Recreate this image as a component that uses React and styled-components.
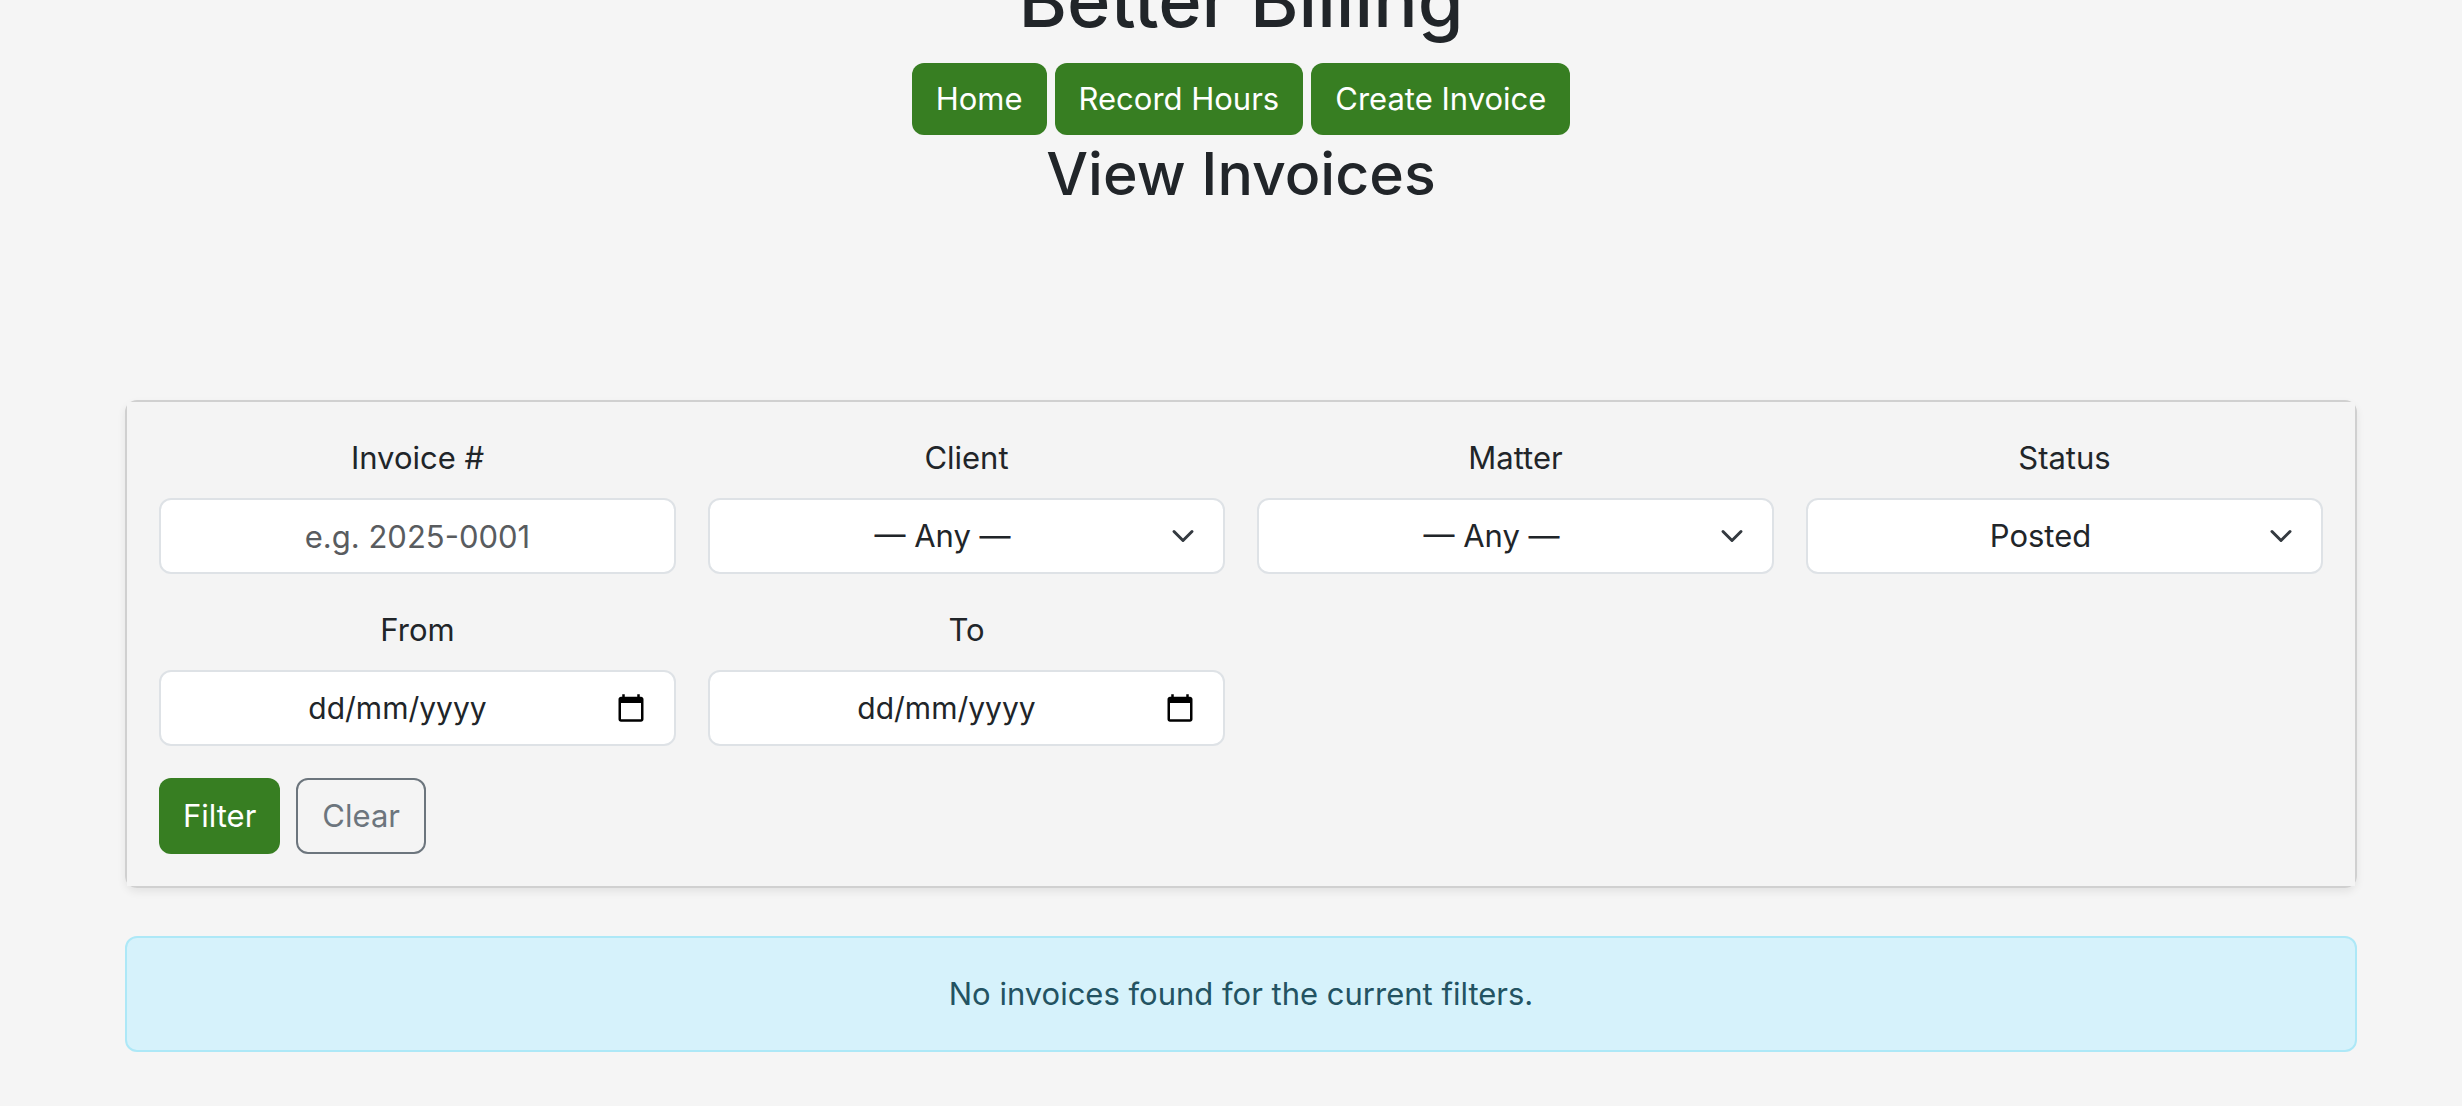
import React from "react";
import styled, { createGlobalStyle, css } from "styled-components";

const chevron = `url("data:image/svg+xml,%3Csvg xmlns='http://www.w3.org/2000/svg' viewBox='0 0 16 16'%3E%3Cpath fill='none' stroke='%23343a40' stroke-linecap='round' stroke-linejoin='round' stroke-width='2' d='m2 5 6 6 6-6'/%3E%3C/svg%3E")`;
const calendar = `url("data:image/svg+xml,%3Csvg xmlns='http://www.w3.org/2000/svg' viewBox='0 0 24 24'%3E%3Cpath d='M20 3h-1V1h-2v2H7V1H5v2H4c-1.1 0-2 .9-2 2v16c0 1.1.9 2 2 2h16c1.1 0 2-.9 2-2V5c0-1.1-.9-2-2-2zm0 18H4V8h16v13z'/%3E%3C/svg%3E")`;

const GlobalStyle = createGlobalStyle`
  *, *::before, *::after { box-sizing: border-box; }
  body {
    margin: 0;
    background: #f5f5f5;
    color: #212529;
    font-family: Inter, "Liberation Sans", sans-serif;
    font-size: 31px;
    line-height: 48px;
    text-align: center;
  }
`;

const Page = styled.div`
  padding: 0 105px 0 125px;
`;

const Header = styled.header`
  margin-top: -48px;
  margin-bottom: 188px;
`;

const Title = styled.h1`
  margin: 0 0 15px;
  font-size: 74px;
  line-height: 96px;
  font-weight: 500;
`;

const Subtitle = styled.h2`
  margin: 0;
  font-size: 59px;
  line-height: 77px;
  font-weight: 500;
`;

const Nav = styled.nav`
  display: flex;
  justify-content: center;
  gap: 8px;
`;

const buttonBase = css`
  display: inline-flex;
  align-items: center;
  justify-content: center;
  padding: 12px 24px;
  border: 0;
  border-radius: 12px;
  font: inherit;
  cursor: pointer;
`;

const NavLink = styled.a`
  ${buttonBase}
  background: #377e22;
  color: #fff;
  text-decoration: none;
`;

const Button = styled.button`
  ${buttonBase}
  height: 76px;
  ${({ $outline }) =>
    $outline
      ? css`
          background: transparent;
          border: 2px solid #6c757d;
          color: #6c757d;
        `
      : css`
          background: #377e22;
          color: #fff;
        `}
`;

const Card = styled.section`
  border: 2px solid #d0d0d0;
  border-radius: 12px;
  box-shadow: 0 4px 8px rgba(0, 0, 0, 0.075);
`;

const CardBody = styled.form`
  display: grid;
  gap: 32px;
  padding: 32px;
  background: #f4f4f4;
`;

const Fields = styled.div`
  display: grid;
  grid-template-columns: repeat(4, 1fr);
  gap: 32px;
`;

const Field = styled.div`
  display: flex;
  flex-direction: column;
  gap: 16px;
  min-width: 0;
`;

const control = css`
  width: 100%;
  height: 76px;
  padding: 12px 24px;
  border: 2px solid #dee2e6;
  border-radius: 12px;
  background-color: #fff;
  background-repeat: no-repeat;
  color: #212529;
  font: inherit;
  text-align: center;
  appearance: none;
`;

const TextInput = styled.input`
  ${control}
  &::placeholder {
    color: #595c5f;
    opacity: 1;
  }
`;

const DateInput = styled.input`
  ${control}
  padding-right: 64px;
  font-size: 30px;
  background-image: ${calendar};
  background-size: 30px 30px;
  background-position: right 28px center;
  &::placeholder {
    color: #212529;
    opacity: 1;
  }
`;

const Select = styled.select`
  ${control}
  padding-right: 72px;
  background-image: ${chevron};
  background-size: 24px 24px;
  background-position: right 28px center;
`;

const Actions = styled.div`
  display: flex;
  gap: 16px;
`;

const Alert = styled.div`
  margin-top: 48px;
  padding: 32px;
  border: 2px solid #ade8f7;
  border-radius: 12px;
  background: #d6f2fb;
  color: #235362;
`;

function SelectField({ id, label, options }) {
  return (
    <Field>
      <label htmlFor={id}>{label}</label>
      <Select id={id} name={id}>
        {options.map((option) => (
          <option key={option}>{option}</option>
        ))}
      </Select>
    </Field>
  );
}

function DateField({ id, label }) {
  return (
    <Field>
      <label htmlFor={id}>{label}</label>
      <DateInput id={id} name={id} type="text" inputMode="numeric" placeholder="dd/mm/yyyy" />
    </Field>
  );
}

export default function App() {
  return (
    <>
      <GlobalStyle />
      <Page>
        <Header>
          <Title>Better Billing</Title>
          <Nav>
            <NavLink href="#home">Home</NavLink>
            <NavLink href="#hours">Record Hours</NavLink>
            <NavLink href="#create">Create Invoice</NavLink>
          </Nav>
          <Subtitle>View Invoices</Subtitle>
        </Header>
        <main>
          <Card>
            <CardBody onSubmit={(event) => event.preventDefault()}>
              <Fields>
                <Field>
                  <label htmlFor="invoice">Invoice #</label>
                  <TextInput id="invoice" name="invoice" type="text" placeholder="e.g. 2025-0001" />
                </Field>
                <SelectField id="client" label="Client" options={["— Any —"]} />
                <SelectField id="matter" label="Matter" options={["— Any —"]} />
                <SelectField id="status" label="Status" options={["Posted"]} />
                <DateField id="from" label="From" />
                <DateField id="to" label="To" />
              </Fields>
              <Actions>
                <Button type="submit">Filter</Button>
                <Button type="reset" $outline>Clear</Button>
              </Actions>
            </CardBody>
          </Card>
          <Alert role="status">No invoices found for the current filters.</Alert>
        </main>
      </Page>
    </>
  );
}
